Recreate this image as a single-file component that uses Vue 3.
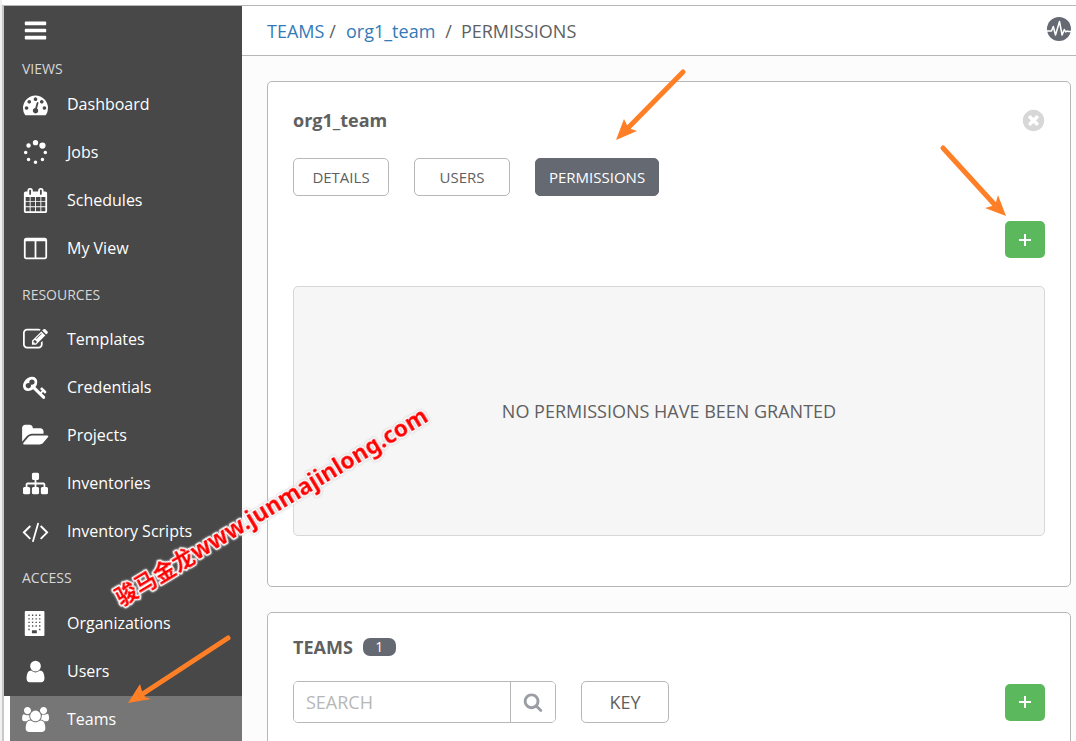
<script setup>
const groups = [
  {
    title: 'VIEWS',
    items: [
      { label: 'Dashboard', icon: 'dashboard' },
      { label: 'Jobs', icon: 'jobs' },
      { label: 'Schedules', icon: 'schedules' },
      { label: 'My View', icon: 'view' },
    ],
  },
  {
    title: 'RESOURCES',
    items: [
      { label: 'Templates', icon: 'templates' },
      { label: 'Credentials', icon: 'credentials' },
      { label: 'Projects', icon: 'projects' },
      { label: 'Inventories', icon: 'inventories' },
      { label: 'Inventory Scripts', icon: 'scripts' },
    ],
  },
  {
    title: 'ACCESS',
    items: [
      { label: 'Organizations', icon: 'organizations' },
      { label: 'Users', icon: 'users' },
      { label: 'Teams', icon: 'teams', active: true },
    ],
  },
]

const icons = {
  dashboard:
    'M384 1152q0-53-37.5-90.5t-90.5-37.5-90.5 37.5-37.5 90.5 37.5 90.5 90.5 37.5 90.5-37.5 37.5-90.5zm192-448q0-53-37.5-90.5t-90.5-37.5-90.5 37.5-37.5 90.5 37.5 90.5 90.5 37.5 90.5-37.5 37.5-90.5zm428 481l101-382q6-26-7.5-48.5t-38.5-29.5-48 6.5-30 39.5l-101 382q-60 5-107 43.5t-63 98.5q-20 77 20 146t117 89 146-20 89-117q16-60-6-117t-72-91zm660-33q0-53-37.5-90.5t-90.5-37.5-90.5 37.5-37.5 90.5 37.5 90.5 90.5 37.5 90.5-37.5 37.5-90.5zm-640-640q0-53-37.5-90.5t-90.5-37.5-90.5 37.5-37.5 90.5 37.5 90.5 90.5 37.5 90.5-37.5 37.5-90.5zm448 192q0-53-37.5-90.5t-90.5-37.5-90.5 37.5-37.5 90.5 37.5 90.5 90.5 37.5 90.5-37.5 37.5-90.5zm320 448q0 261-141 483-19 29-54 29h-1402q-35 0-54-29-141-221-141-483 0-182 71-348t191-286 286-191 348-71 348 71 286 191 191 286 71 348z',
  jobs:
    'M526 1394a128 128 0 1 1-256 0a128 128 0 1 1 256 0zM1024 1600a128 128 0 1 1-256 0a128 128 0 1 1 256 0zM320 896a128 128 0 1 1-256 0a128 128 0 1 1 256 0zM1522 1394a128 128 0 1 1-256 0a128 128 0 1 1 256 0zM558 398a160 160 0 1 1-320 0a160 160 0 1 1 320 0zM1728 896a128 128 0 1 1-256 0a128 128 0 1 1 256 0zM1088 192a192 192 0 1 1-384 0a192 192 0 1 1 384 0zM1618 398a224 224 0 1 1-448 0a224 224 0 1 1 448 0z',
  schedules:
    'M192 1664h288v-288h-288v288zm352 0h320v-288h-320v288zm-352-352h288v-320h-288v320zm352 0h320v-320h-320v320zm-352-384h288v-288h-288v288zm736 736h320v-288h-320v288zm-384-736h320v-288h-320v288zm768 736h288v-288h-288v288zm-384-352h320v-320h-320v320zm-352-864v-288q0-13-9.500-22.500t-22.500-9.500h-64q-13 0-22.500 9.500t-9.500 22.500v288q0 13 9.500 22.500t22.500 9.500h64q13 0 22.500-9.500t9.500-22.500zm736 864h288v-320h-288v320zm-384-384h320v-288h-320v288zm384 0h288v-288h-288v288zm32-480v-288q0-13-9.500-22.500t-22.500-9.500h-64q-13 0-22.500 9.500t-9.500 22.500v288q0 13 9.500 22.500t22.500 9.500h64q13 0 22.500-9.500t9.500-22.500zm384-64v1280q0 52-38 90t-90 38h-1408q-52 0-90-38t-38-90v-1280q0-52 38-90t90-38h128v-96q0-66 47-113t113-47h64q66 0 113 47t47 113v96h384v-96q0-66 47-113t113-47h64q66 0 113 47t47 113v96h128q52 0 90 38t38 90z',
  view:
    'M224 1536h608v-1152h-640v1120q0 13 9.500 22.500t22.500 9.500zm1376-32v-1120h-640v1152h608q13 0 22.500-9.500t9.500-22.500zm128-1216v1216q0 66-47 113t-113 47h-1344q-66 0-113-47t-47-113v-1216q0-66 47-113t113-47h1344q66 0 113 47t47 113z',
  templates:
    'M888 1184l116-116-152-152-116 116v56h96v96h56zm440-720q-16-16-33 1l-350 350q-17 17-1 33t33-1l350-350q17-17 1-33zm80 594v190q0 119-84.5 203.5t-203.5 84.5h-832q-119 0-203.5-84.5t-84.5-203.5v-832q0-119 84.5-203.5t203.5-84.5h832q63 0 117 25 15 7 18 23 3 17-9 29l-49 49q-14 14-32 8-23-6-45-6h-832q-66 0-113 47t-47 113v832q0 66 47 113t113 47h832q66 0 113-47t47-113v-126q0-13 9-22l64-64q15-15 35-7t20 29zm-96-738l288 288-672 672h-288v-288zm444 132l-92 92-288-288 92-92q28-28 68-28t68 28l152 152q28 28 28 68t-28 68z',
  credentials:
    'M832 512q0-80-56-136t-136-56-136 56-56 136q0 42 19 83-41-19-83-19-80 0-136 56t-56 136 56 136 136 56 136-56 56-136q0-42-19-83 41 19 83 19 80 0 136-56t56-136zm851 704q0 17-49 66t-66 49q-9 0-28.5-16t-36.5-33-38.5-40-24.5-26l-96 96 220 220q28 28 28 68 0 42-39 81t-81 39q-40 0-68-28l-671-671q-176 131-365 131-163 0-265.5-102.5t-102.5-265.5q0-160 95-313t248-248 313-95q163 0 265.5 102.5t102.5 265.5q0 189-131 365l355 355 96-96q-3-3-26-24.5t-40-38.5-33-36.5-16-28.5q0-17 49-66t66-49q13 0 23 10 6 6 46 44.5t82 79.5 86.5 86 73 78 28.5 41z',
  projects:
    'M1815 952q0 31-31 66l-336 396q-43 51-120.5 86.5t-143.5 35.5h-1088q-34 0-60.5-13t-26.5-43q0-31 31-66l336-396q43-51 120.5-86.5t143.5-35.5h1088q34 0 60.5 13t26.5 43zm-343-344v160h-832q-94 0-197 47.5t-164 119.5l-337 396-5 6q0-4-.5-12.5t-.5-12.5v-960q0-92 66-158t158-66h320q92 0 158 66t66 158v32h544q92 0 158 66t66 158z',
  inventories:
    'M1792 1248v320q0 40-28 68t-68 28h-320q-40 0-68-28t-28-68v-320q0-40 28-68t68-28h96v-192h-512v192h96q40 0 68 28t28 68v320q0 40-28 68t-68 28h-320q-40 0-68-28t-28-68v-320q0-40 28-68t68-28h96v-192h-512v192h96q40 0 68 28t28 68v320q0 40-28 68t-68 28h-320q-40 0-68-28t-28-68v-320q0-40 28-68t68-28h96v-192q0-52 38-90t90-38h512v-192h-96q-40 0-68-28t-28-68v-320q0-40 28-68t68-28h320q40 0 68 28t28 68v320q0 40-28 68t-68 28h-96v192h512q52 0 90 38t38 90v192h96q40 0 68 28t28 68z',
  scripts:
    'M553 1399l-50 50q-10 10-23 10t-23-10l-466-466q-10-10-10-23t10-23l466-466q10-10 23-10t23 10l50 50q10 10 10 23t-10 23l-393 393 393 393q10 10 10 23t-10 23zm591-1067l-373 1291q-4 13-15.500 19.500t-23.500 2.500l-62-17q-13-4-19.500-15.500t-2.500-24.500l373-1291q4-13 15.500-19.500t23.500-2.500l62 17q13 4 19.500 15.500t2.500 24.500zm657 651l-466 466q-10 10-23 10t-23-10l-50-50q-10-10-10-23t10-23l393-393-393-393q-10-10-10-23t10-23l50-50q10-10 23-10t23 10l466 466q10 10 10 23t-10 23z',
  organizations:
    'M192 0H1472q64 0 64 64V1728q0 64-64 64H192q-64 0-64-64V64q0-64 64-64zM384 256v96h96v-96zM640 256v96h96v-96zM896 256v96h96v-96zM1152 256v96h96v-96zM384 512v96h96v-96zM640 512v96h96v-96zM896 512v96h96v-96zM1152 512v96h96v-96zM384 768v96h96v-96zM640 768v96h96v-96zM896 768v96h96v-96zM1152 768v96h96v-96zM384 1024v96h96v-96zM640 1024v96h96v-96zM896 1024v96h96v-96zM1152 1024v96h96v-96zM384 1280v96h96v-96zM1152 1280v96h96v-96zM640 1376v224h352v-224z',
  users:
    'M1536 1399q0 109-62.5 187t-150.5 78h-854q-88 0-150.5-78t-62.5-187q0-85 8.500-160.500t31.500-152 58.500-131 94-89 134.500-34.500q131 128 313 128t313-128q76 0 134.500 34.500t94 89 58.500 131 31.500 152 8.500 160.500zm-256-887q0 159-112.500 271.500t-271.500 112.500-271.500-112.500-112.500-271.500 112.500-271.500 271.500-112.500 271.500 112.500 112.500 271.500z',
  teams:
    'M593 896q-162 5-265 128h-134q-82 0-138-40.500t-56-118.500q0-353 124-353 6 0 43.500 21t97.500 42.500 119 21.500q67 0 133-23-5 37-5 66 0 159 81 256zm1071 637q0 120-73 189.500t-194 69.500h-874q-121 0-194-69.500t-73-189.500q0-53 3.500-103.500t14-109 26.500-108.500 43-97.500 62-81 85.500-53.500 111.500-20q10 0 43 21.500t73 48 107 48 135 21.500 135-21.500 107-48 73-48 43-21.500q61 0 111.500 20t85.500 53.500 62 81 43 97.500 26.500 108.500 14 109 3.500 103.500zm-1024-1277q0 106-75 181t-181 75-181-75-75-181 75-181 181-75 181 75 75 181zm704 384q0 159-112.500 271.500t-271.500 112.500-271.500-112.500-112.500-271.500 112.500-271.500 271.500-112.500 271.500 112.500 112.500 271.500zm576 225q0 78-56 118.500t-138 40.500h-134q-103-123-265-128 93-134 93-293 0-29-5-66 66 23 133 23 59 0 119-21.500t97.500-42.500 43.500-21q124 0 124 353zm-128-609q0 106-75 181t-181 75-181-75-75-181 75-181 181-75 181 75 75 181z',
}
</script>

<template>
  <div class="app">
    <aside class="sidebar">
      <button class="menu" type="button" aria-label="Toggle menu">
        <svg class="icon" viewBox="0 0 1792 1792">
          <path d="M1664 1344v128q0 26-19 45t-45 19h-1408q-26 0-45-19t-19-45v-128q0-26 19-45t45-19h1408q26 0 45 19t19 45zm0-512v128q0 26-19 45t-45 19h-1408q-26 0-45-19t-19-45v-128q0-26 19-45t45-19h1408q26 0 45 19t19 45zm0-512v128q0 26-19 45t-45 19h-1408q-26 0-45-19t-19-45v-128q0-26 19-45t45-19h1408q26 0 45 19t19 45z" />
        </svg>
      </button>
      <nav>
        <section v-for="group in groups" :key="group.title" class="group">
          <h2 class="group-title">{{ group.title }}</h2>
          <a
            v-for="item in group.items"
            :key="item.label"
            href="#"
            class="nav-item"
            :class="{ active: item.active }"
          >
            <svg class="icon" :viewBox="item.icon === 'teams' ? '64 0 1792 1792' : '0 0 1792 1792'">
              <path fill-rule="evenodd" :d="icons[item.icon]" />
            </svg>
            <span>{{ item.label }}</span>
          </a>
        </section>
      </nav>
    </aside>

    <div class="main">
      <header class="topbar">
        <nav class="crumbs">
          <a href="#">TEAMS</a><span class="first-slash">/</span>
          <a href="#">org1_team</a><span class="slash">/</span>
          <span>PERMISSIONS</span>
        </nav>
        <button class="activity" type="button" aria-label="Activity stream">
          <svg viewBox="0 0 24 24">
            <circle cx="12" cy="12" r="12" fill="#646972" />
            <path d="M0 14h4.500l1.800-4.500 2.200 8.500 4-13.500 2.600 13.500 2.200-5.500 1.400 2.500 1.300-1 1.500 .5h3" fill="none" stroke="#fff" stroke-width="1.500" stroke-linejoin="round" />
          </svg>
        </button>
      </header>

      <main class="content">
        <section class="card">
          <div class="card-head">
            <h1 class="title">org1_team</h1>
            <button class="close" type="button" aria-label="Close">
              <svg class="icon" viewBox="0 0 1792 1792">
                <path d="M1277 1122q0-26-19-45l-181-181 181-181q19-19 19-45 0-27-19-46l-90-90q-19-19-46-19-26 0-45 19l-181 181-181-181q-19-19-45-19-27 0-46 19l-90 90q-19 19-19 46 0 26 19 45l181 181-181 181q-19 19-19 45 0 27 19 46l90 90q19 19 46 19 26 0 45-19l181-181 181 181q19 19 45 19 27 0 46-19l90-90q19-19 19-46zm387-226q0 209-103 385.500t-279.500 279.500-385.500 103-385.500-103-279.500-279.500-103-385.500 103-385.500 279.500-279.500 385.500-103 385.500 103 279.500 279.500 103 385.500z" />
              </svg>
            </button>
          </div>
          <div class="tabs">
            <button class="tab" type="button">DETAILS</button>
            <button class="tab" type="button">USERS</button>
            <button class="tab selected" type="button">PERMISSIONS</button>
          </div>
          <div class="actions">
            <button class="add" type="button" aria-label="Add permission">
              <svg viewBox="0 0 14 14"><path d="M7 1v12M1 7h12" /></svg>
            </button>
          </div>
          <div class="empty">NO PERMISSIONS HAVE BEEN GRANTED</div>
        </section>

        <section class="card list">
          <div class="list-head">
            <h2 class="title">TEAMS</h2>
            <span class="badge">1</span>
          </div>
          <div class="toolbar">
            <form class="search" @submit.prevent>
              <input type="text" placeholder="SEARCH" aria-label="Search" />
              <button type="submit" aria-label="Run search">
                <svg viewBox="0 0 1792 1792">
                  <path d="M1216 832q0-185-131.500-316.500t-316.500-131.500-316.500 131.500-131.500 316.500 131.500 316.500 316.500 131.500 316.500-131.500 131.500-316.500zm512 832q0 52-38 90t-90 38q-54 0-90-38l-343-342q-179 124-399 124-143 0-273.500-55.500t-225-150-150-225-55.500-273.500 55.500-273.500 150-225 225-150 273.500-55.500 273.500 55.500 225 150 150 225 55.500 273.500q0 220-124 399l343 343q37 37 37 90z" />
                </svg>
              </button>
            </form>
            <button class="key" type="button">KEY</button>
            <button class="add push" type="button" aria-label="Add team">
              <svg viewBox="0 0 14 14"><path d="M7 1v12M1 7h12" /></svg>
            </button>
          </div>
        </section>
      </main>
    </div>

    <svg class="notes" width="1076" height="741" viewBox="0 0 1076 741">
      <g stroke="#ff7f27" stroke-width="5" stroke-linecap="round">
        <path d="M683 72L627 129" />
        <path d="M943 148L995 205" />
        <path d="M228 638L141 695" />
      </g>
      <g fill="#ff7f27">
        <path d="M616 140L624 119L627 125L631 129L637 131z" />
        <path d="M1006 216L998 195L996 202L992 206L985 208z" />
        <path d="M128 703L140 684L142 691L145 697L151 699z" />
      </g>
      <text class="watermark" transform="translate(121 606) rotate(-31)">骏马金龙<tspan class="site">www.junmajinlong.com</tspan></text>
    </svg>
  </div>
</template>

<style>
body {
  margin: 0;
  background: #fcfcfc;
}
</style>

<style scoped>
* {
  box-sizing: border-box;
}

.app {
  position: relative;
  display: flex;
  height: 100vh;
  overflow: hidden;
  padding-top: 5px;
  background: linear-gradient(#fff, #fff) top / 100% 5px no-repeat, #fcfcfc;
  border-left: 2px solid #f0f0f0;
  color: #606060;
  font-family: "Open Sans", "Noto Sans", "Liberation Sans", sans-serif;
  font-size: 18px;
}

button {
  font-family: inherit;
  cursor: pointer;
}

a {
  text-decoration: none;
}

.icon {
  width: 25px;
  height: 25px;
  flex: none;
  overflow: visible;
  fill: currentColor;
}

.sidebar {
  flex: none;
  width: 240px;
  border-left: 2px solid #c8c8c8;
  border-top: 1px solid #b7b7b7;
  background: #484848;
  color: #fff;
}

.menu {
  display: flex;
  align-items: center;
  height: 50px;
  padding: 0 0 2px 19px;
  border: 0;
  background: none;
  color: #fff;
}

.group-title {
  margin: 0;
  height: 44px;
  padding: 1px 0 0 18px;
  font-size: 14px;
  font-weight: 400;
  line-height: 42px;
  color: #d7d7d7;
}

.group:first-child .group-title {
  height: 25px;
  padding-top: 0;
  line-height: 26px;
}

.group:nth-child(2) .group-title {
  height: 43px;
}

.nav-item {
  display: flex;
  align-items: center;
  gap: 19px;
  height: 48px;
  padding: 0 0 2px 19px;
  font-size: 16px;
  line-height: 46px;
  color: #fff;
}

.nav-item.active {
  padding-left: 13px;
  border-left: 6px solid #fff;
  background: #767676;
}

.main {
  flex: 1;
  min-width: 0;
}

.topbar {
  display: flex;
  align-items: center;
  justify-content: space-between;
  height: 51px;
  padding: 0 5px 0 25px;
  border-top: 1px solid #b7b7b7;
  border-bottom: 1px solid #b7b7b7;
  background: #fff;
}

.crumbs {
  display: flex;
}

.crumbs a {
  color: #337ab7;
}

.first-slash {
  margin: 0 10px 0 5px;
}

.slash {
  margin: 0 9px 0 10px;
}

.activity {
  display: flex;
  padding: 0 0 4px;
  border: 0;
  background: none;
}

.activity svg {
  width: 24px;
  height: 24px;
}

.content {
  display: flex;
  flex-direction: column;
  gap: 25px;
  padding: 25px 5px 25px 25px;
}

.card {
  padding: 25px 25px 50px;
  border: 1px solid #b7b7b7;
  border-radius: 5px;
  background: #fff;
}

.card-head {
  display: flex;
  align-items: center;
  justify-content: space-between;
  height: 26px;
}

.title {
  margin: 0;
  font-size: 18px;
  line-height: 26px;
  font-weight: 700;
}

.close {
  display: flex;
  padding: 0;
  margin-right: -1px;
  border: 0;
  background: none;
  color: #d7d7d7;
}

.tabs {
  display: flex;
  gap: 25px;
  margin-top: 25px;
}

.tab {
  min-width: 96px;
  height: 38px;
  padding: 0 13px;
  border: 1px solid #b7b7b7;
  border-radius: 5px;
  background: #fff;
  color: #606060;
  font-size: 15px;
}

.tab.selected {
  border-color: #646972;
  background: #646972;
  color: #fff;
}

.actions {
  display: flex;
  justify-content: flex-end;
  margin: 25px 0 28px;
}

.add {
  display: flex;
  align-items: center;
  justify-content: center;
  width: 40px;
  height: 37px;
  padding: 0;
  border: 0;
  border-radius: 5px;
  background: #5cb85c;
}

.add svg {
  width: 14px;
  height: 14px;
  stroke: #fff;
  stroke-width: 2;
}

.push {
  margin-left: auto;
}

.empty {
  display: flex;
  align-items: center;
  justify-content: center;
  min-height: 250px;
  border: 1px solid #d7d7d7;
  border-radius: 5px;
  background: #f6f6f6;
}

.list {
  flex: none;
  padding-top: 21px;
}

.list-head {
  display: flex;
  align-items: center;
  gap: 10px;
}

.badge {
  width: 33px;
  border-radius: 7px;
  background: #646972;
  color: #fff;
  font-size: 14px;
  line-height: 18px;
  text-align: center;
}

.toolbar {
  display: flex;
  align-items: center;
  gap: 25px;
  margin-top: 21px;
}

.search {
  display: flex;
  width: 263px;
  height: 42px;
  border: 1px solid #b7b7b7;
  border-radius: 5px;
  overflow: hidden;
}

.search input {
  flex: 1;
  min-width: 0;
  padding: 0 12px;
  border: 0;
  outline: 0;
  background: #fff;
  color: #606060;
  font-family: inherit;
  font-size: 18px;
}

.search input::placeholder {
  color: #b7b7b7;
}

.search button {
  display: flex;
  align-items: center;
  justify-content: center;
  width: 45px;
  padding: 0;
  border: 0;
  border-left: 1px solid #b7b7b7;
  background: #fff;
}

.search svg {
  width: 20px;
  height: 20px;
  fill: #9a9da3;
}

.key {
  width: 88px;
  height: 42px;
  border: 1px solid #b7b7b7;
  border-radius: 5px;
  background: #fff;
  color: #606060;
  font-size: 18px;
}

.notes {
  position: absolute;
  top: 0;
  left: -2px;
  pointer-events: none;
}

.watermark {
  fill: #f00;
  stroke: #fff;
  stroke-width: 3px;
  stroke-linejoin: round;
  paint-order: stroke;
  filter: drop-shadow(0 0 1px #bbb);
  font-family: "Noto Sans", "Noto Sans CJK SC", sans-serif;
  font-size: 22px;
  font-weight: 700;
}

.site {
  font-size: 23px;
}
</style>
